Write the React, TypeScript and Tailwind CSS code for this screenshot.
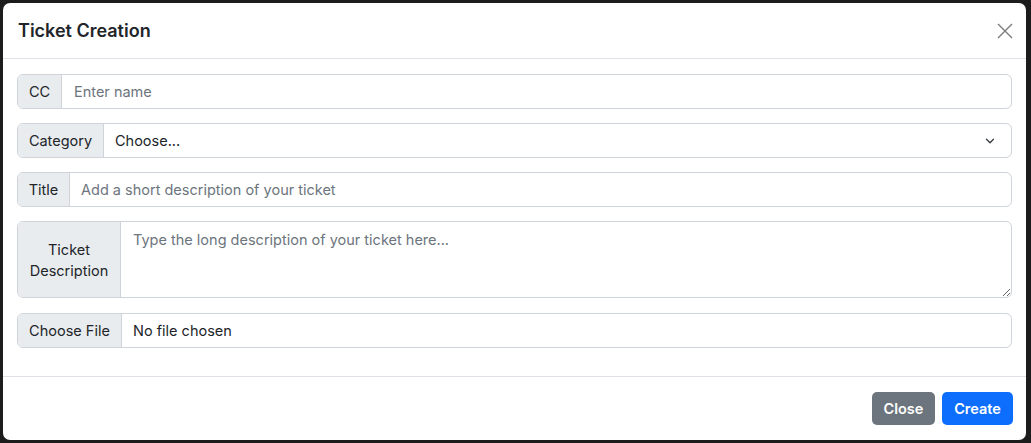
import { ChevronDown } from "lucide-react";

const font = { fontFamily: "Inter, 'Noto Sans', sans-serif" };

function Addon({ children, w }: { children: React.ReactNode; w: string }) {
  return (
    <span
      className={`flex shrink-0 items-center justify-center border-r border-[#ced4da] bg-[#e9ecef] text-center text-[14.5px] leading-[21px] text-[#212529] ${w}`}
    >
      {children}
    </span>
  );
}

export default function App() {
  return (
    <div className="h-[443px] w-[1031px] overflow-hidden bg-[#1c1c1c] pl-[3px] pt-[3px]" style={font}>
      <div className="flex h-[437px] w-[1023px] flex-col rounded-[7px] bg-white">
        {/* Header */}
        <div className="flex h-[56px] items-center justify-between border-b border-[#dee2e6] pl-[15px] pr-[13px]">
          <h5 className="text-[18px] font-semibold text-[#212529]">Ticket Creation</h5>
          <button className="flex h-[16px] w-[16px] items-center justify-center">
            <svg width="16" height="16" viewBox="0 0 16 16" fill="none" stroke="#7a7a7a" strokeWidth="1.4">
              <path d="M1 1L15 15M15 1L1 15" />
            </svg>
          </button>
        </div>

        {/* Body */}
        <div className="flex flex-1 flex-col gap-[14px] px-[14px] pt-[15px]">
          <div className="flex h-[35px] overflow-hidden rounded-[6px] border border-[#ced4da]">
            <Addon w="w-[44px]">CC</Addon>
            <input
              className="flex-1 px-[12px] text-[14.5px] text-[#212529] outline-none placeholder:text-[#6c757d]"
              placeholder="Enter name"
            />
          </div>

          <div className="flex h-[35px] overflow-hidden rounded-[6px] border border-[#ced4da]">
            <Addon w="w-[86px]">Category</Addon>
            <div className="flex flex-1 items-center justify-between pl-[11px] pr-[14px] text-[14.5px] text-[#212529]">
              <span>Choose...</span>
              <ChevronDown size={14} strokeWidth={2.2} className="text-[#343a40]" />
            </div>
          </div>

          <div className="flex h-[35px] overflow-hidden rounded-[6px] border border-[#ced4da]">
            <Addon w="w-[52px]">Title</Addon>
            <input
              className="flex-1 px-[11px] text-[14.5px] text-[#212529] outline-none placeholder:text-[#6c757d]"
              placeholder="Add a short description of your ticket"
            />
          </div>

          <div className="mb-[1px] flex h-[77px] overflow-hidden rounded-[6px] border border-[#ced4da]">
            <Addon w="w-[103px]">
              Ticket
              <br />
              Description
            </Addon>
            <textarea
              className="flex-1 px-[12px] py-[7px] text-[14.5px] leading-[21px] text-[#212529] outline-none placeholder:text-[#6c757d]"
              placeholder="Type the long description of your ticket here..."
            />
          </div>

          <div className="flex h-[35px] overflow-hidden rounded-[6px] border border-[#ced4da]">
            <Addon w="w-[104px]">Choose File</Addon>
            <span className="flex flex-1 items-center px-[11px] text-[14.5px] text-[#212529]">No file chosen</span>
          </div>
        </div>

        {/* Footer */}
        <div className="flex h-[64px] items-center justify-end gap-[7px] border-t border-[#dee2e6] pr-[13px]">
          <button className="h-[33px] w-[63px] rounded-[5px] bg-[#6c757d] text-[14.5px] font-semibold text-white">
            Close
          </button>
          <button className="h-[33px] w-[71px] rounded-[5px] bg-[#0d6efd] text-[14.5px] font-semibold text-white">
            Create
          </button>
        </div>
      </div>
    </div>
  );
}
